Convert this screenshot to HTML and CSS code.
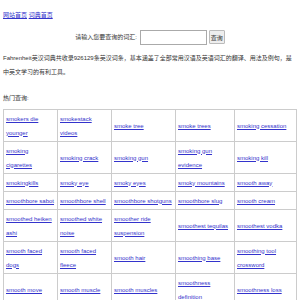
FILE: index.html
```html
<!DOCTYPE html>
<html>
<head>
<meta http-equiv='Content-Type' content='text/html; charset=UTF-8' />
<title>Fahrenheit英汉词典</title>
<link rel="stylesheet" href="styles.css">
</head>
<body>
    <div id='nav'>
        <a href='#'>网站首页</a> <a href='#'>词典首页</a>
    </div>

    <form id='search' name='form1'>
        <label>请输入您要查询的词汇:</label>
        <input type='text' name='q' class='query'>
        <input type='button' value='查询' class='btn'>
    </form>

    <p id='intro'>Fahrenheit英汉词典共收录926129条英汉词条，基本涵盖了全部常用汉语及英语词汇的翻译、用法及例句，是中英文学习的有利工具。</p>

    <div id='hot-title'>热门查询:</div>

    <table id='hot'>
        <colgroup>
            <col class='c1'><col class='c2'><col class='c3'><col class='c4'><col class='c5'>
        </colgroup>
        <tr>
            <td><a href='#'>smokers die younger</a></td>
            <td><a href='#'>smokestack videos</a></td>
            <td><a href='#'>smoke tree</a></td>
            <td><a href='#'>smoke trees</a></td>
            <td><a href='#'>smoking cessation</a></td>
        </tr>
        <tr>
            <td><a href='#'>smoking cigarettes</a></td>
            <td><a href='#'>smoking crack</a></td>
            <td><a href='#'>smoking gun</a></td>
            <td><a href='#'>smoking gun evidence</a></td>
            <td><a href='#'>smoking kill</a></td>
        </tr>
        <tr>
            <td><a href='#'>smokingkills</a></td>
            <td><a href='#'>smoky eye</a></td>
            <td><a href='#'>smoky eyes</a></td>
            <td><a href='#'>smoky mountains</a></td>
            <td><a href='#'>smooth away</a></td>
        </tr>
        <tr>
            <td><a href='#'>smoothbore sabot</a></td>
            <td><a href='#'>smoothbore shell</a></td>
            <td><a href='#'>smoothbore shotguns</a></td>
            <td><a href='#'>smoothbore slug</a></td>
            <td><a href='#'>smooth cream</a></td>
        </tr>
        <tr>
            <td><a href='#'>smoothed heiken ashi</a></td>
            <td><a href='#'>smoothed white noise</a></td>
            <td><a href='#'>smoother ride suspension</a></td>
            <td><a href='#'>smoothest tequilas</a></td>
            <td><a href='#'>smoothest vodka</a></td>
        </tr>
        <tr>
            <td><a href='#'>smooth faced dogs</a></td>
            <td><a href='#'>smooth faced fleece</a></td>
            <td><a href='#'>smooth hair</a></td>
            <td><a href='#'>smoothing base</a></td>
            <td><a href='#'>smoothing tool crossword</a></td>
        </tr>
        <tr>
            <td><a href='#'>smooth move</a></td>
            <td><a href='#'>smooth muscle</a></td>
            <td><a href='#'>smooth muscles</a></td>
            <td><a href='#'>smoothness definition</a></td>
            <td><a href='#'>smoothness loss</a></td>
        </tr>
    </table>
</body>
</html>
```

FILE: styles.css
```css
body
{
    margin: 0;
    padding: 8px 3px 0;
    font-family: "Liberation Sans", "Noto Sans CJK SC", sans-serif;
    font-size: 6px;
    line-height: 14px;
    color: #333;
    background: #fff;
}
a
{
    color: #3333cc;
    text-decoration: underline;
}
#nav
{
    height: 14px;
}
#search
{
    display: flex;
    justify-content: center;
    align-items: center;
    gap: 2px;
    height: 16px;
    margin: 7px 0 0;
}
#search label
{
    margin-right: 1px;
}
#search .query
{
    width: 67px;
    height: 15px;
    box-sizing: border-box;
    border: 1px solid #aaa;
    padding: 0;
    margin: 0;
    background: #fff;
}
#search .btn
{
    width: 16px;
    height: 14px;
    box-sizing: border-box;
    border: 1px solid #bbb;
    border-radius: 1px;
    background: #eee;
    padding: 0;
    margin: 0;
    font-family: "Noto Sans CJK SC", sans-serif;
    font-size: 6px;
    color: #333;
}
#intro
{
    margin: 6px 0 0;
}
#hot-title
{
    margin-top: 12px;
}
#hot
{
    margin-top: 4px;
    width: 293px;
    table-layout: fixed;
    border-collapse: collapse;
    border: 1px solid #ccc;
}
#hot .c1 { width: 54px; }
#hot .c2 { width: 54px; }
#hot .c3 { width: 64px; }
#hot .c4 { width: 59px; }
#hot .c5 { width: 62px; }
#hot td
{
    border: 1px solid #ccc;
    padding: 1.5px 2px;
    line-height: 14px;
    vertical-align: middle;
}
```
